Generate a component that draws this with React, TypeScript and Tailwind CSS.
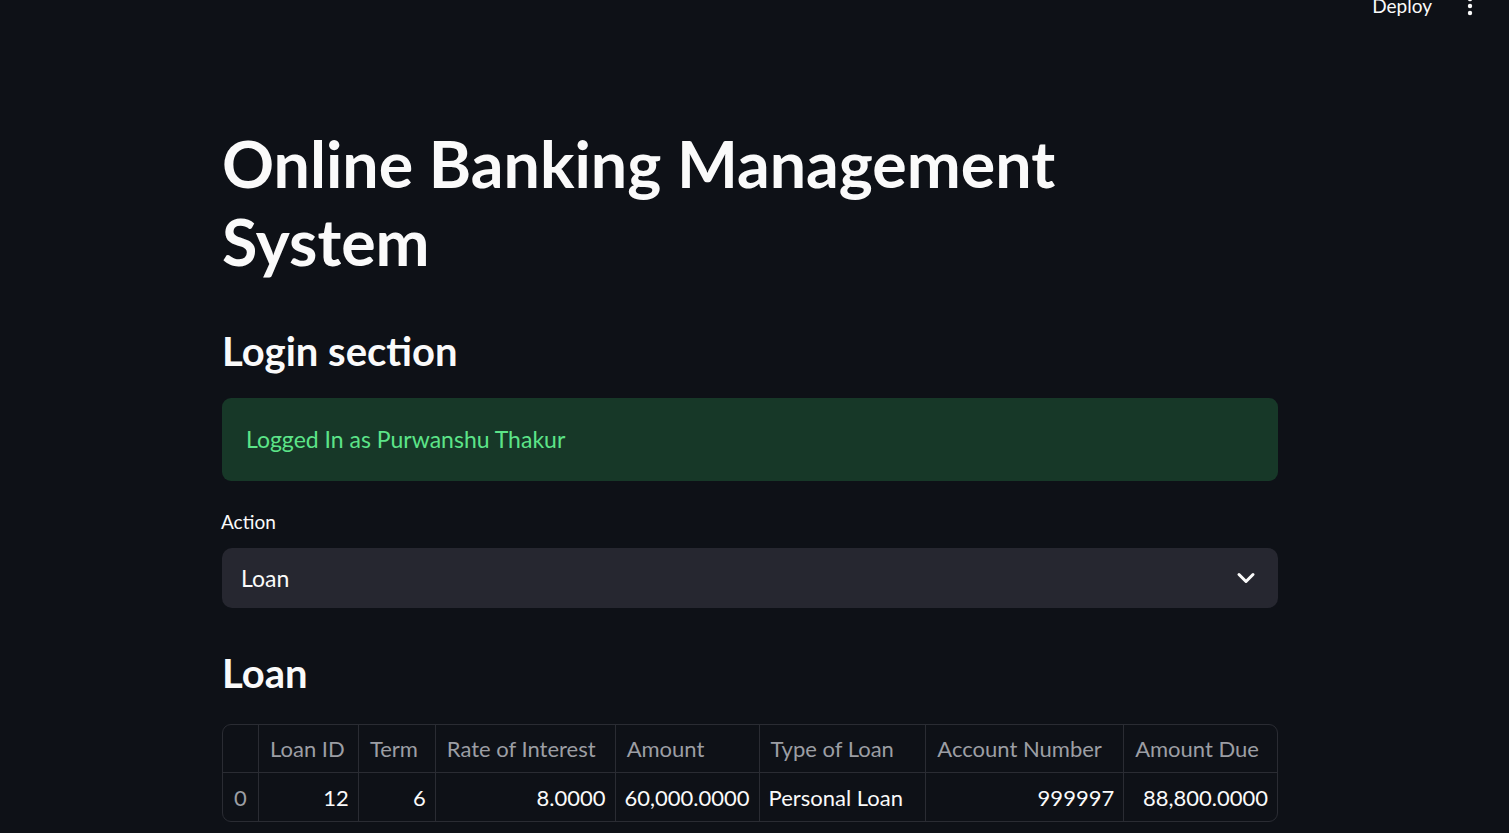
import React from "react";

const font = { fontFamily: "Lato, 'Noto Sans', sans-serif" };

const cols = [
  { w: 36, head: "", val: "0", align: "left", idx: true },
  { w: 100, head: "Loan ID", val: "12", align: "right" },
  { w: 77, head: "Term", val: "6", align: "right" },
  { w: 180, head: "Rate of Interest", val: "8.0000", align: "right" },
  { w: 144, head: "Amount", val: "60,000.0000", align: "right" },
  { w: 167, head: "Type of Loan", val: "Personal Loan", align: "left" },
  { w: 198, head: "Account Number", val: "999997", align: "right" },
  { w: 154, head: "Amount Due", val: "88,800.0000", align: "right" },
];

export default function App() {
  return (
    <div className="relative min-h-[833px] w-full overflow-hidden bg-[#0e1117] text-[#fafafa]" style={font}>
      <div className="absolute right-0 top-[-6px] flex items-center gap-[35px] pr-[36px]">
        <span className="text-[19px] leading-[24px] text-[#fafafa]">Deploy</span>
        <svg width="6" height="24" viewBox="0 0 6 24">
          <circle cx="3" cy="5" r="2.2" fill="#fafafa" />
          <circle cx="3" cy="12" r="2.2" fill="#fafafa" />
          <circle cx="3" cy="19" r="2.2" fill="#fafafa" />
        </svg>
      </div>

      <div className="ml-[222px] w-[1056px] pt-[124px]">
        <h1 className="text-[64.5px] font-bold leading-[78px]">
          Online Banking Management
          <br />
          System
        </h1>

        <h2 className="mt-[45px] text-[40px] font-bold leading-[52px]">Login section</h2>

        <div className="mt-[21px] flex h-[83px] items-center rounded-[9px] bg-[#173828] px-[24px]">
          <span className="text-[23px] text-[#5ce488]">Logged In as Purwanshu Thakur</span>
        </div>

        <div className="mt-[29px] text-[19px] leading-[24px] -ml-[1px]">Action</div>

        <div className="mt-[14px] flex h-[60px] items-center justify-between rounded-[10px] bg-[#262730] pl-[19px] pr-[18px]">
          <span className="text-[23px]">Loan</span>
          <svg width="28" height="28" viewBox="0 0 24 24" fill="none" stroke="#fafafa" strokeWidth="2.6" strokeLinecap="round" strokeLinejoin="round">
            <path d="M6 9l6 6 6-6" />
          </svg>
        </div>

        <h2 className="mt-[39px] text-[40px] font-bold leading-[52px]">Loan</h2>

        <div className="mt-[25px] overflow-hidden rounded-[9px] border border-[#2a2c33]">
          <div className="flex h-[48px] border-b border-[#2a2c33]">
            {cols.map((c, i) => (
              <div
                key={i}
                className={`flex items-center px-[11px] text-[22px] text-[#9c9ea4] ${i > 0 ? "border-l border-[#2a2c33]" : ""}`}
                style={{ width: c.w - (i === 0 ? 1 : 0) }}
              >
                {c.head}
              </div>
            ))}
          </div>
          <div className="flex h-[48px]">
            {cols.map((c, i) => (
              <div
                key={i}
                className={`flex items-center text-[22px] ${c.idx ? "px-[11px] text-[#9c9ea4]" : "px-[9px] text-[#fafafa]"} ${c.align === "right" ? "justify-end" : "justify-start"} ${i > 0 ? "border-l border-[#2a2c33]" : ""}`}
                style={{ width: c.w - (i === 0 ? 1 : 0) }}
              >
                {c.val}
              </div>
            ))}
          </div>
        </div>
      </div>
    </div>
  );
}
